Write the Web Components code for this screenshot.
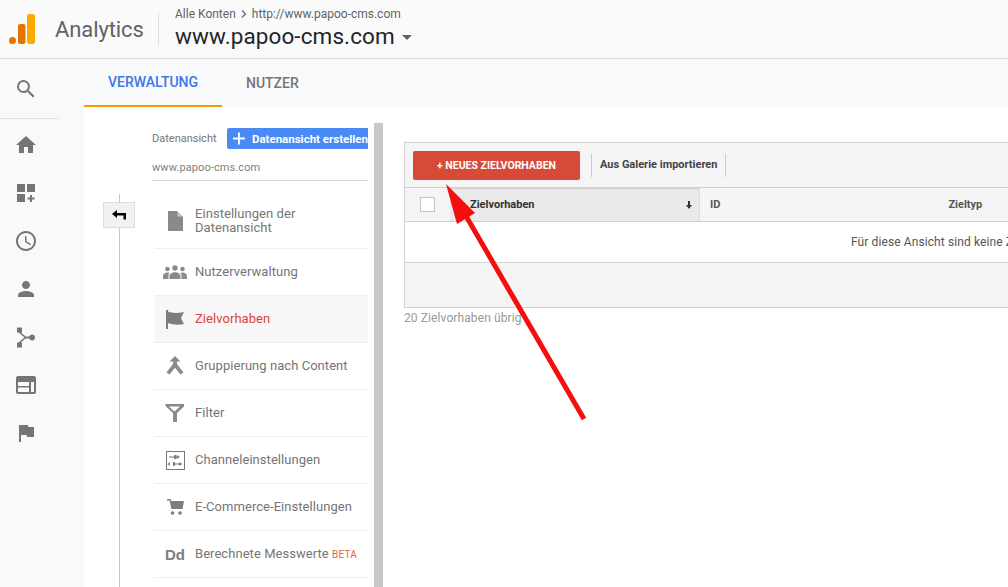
<!DOCTYPE html>
<html lang="de">
  <head>
    <meta charset="UTF-8" />
    <title>Analytics Zielvorhaben</title>
    <style>
      html, body { margin: 0; height: 100%; overflow: hidden; background: #fff; }
      body { font-family: Roboto, "Liberation Sans", sans-serif; }
    </style>
  </head>
  <body>
    <ga-app>
      <ga-header slot="header"></ga-header>
      <ga-rail slot="rail"></ga-rail>
      <ga-tabs slot="tabs"></ga-tabs>
      <ga-admin-nav slot="nav">
        <ga-nav-item icon="doc" tall>Einstellungen der<br />Datenansicht</ga-nav-item>
        <ga-nav-item icon="people">Nutzerverwaltung</ga-nav-item>
        <ga-nav-item icon="flag" active>Zielvorhaben</ga-nav-item>
        <ga-nav-item icon="merge">Gruppierung nach Content</ga-nav-item>
        <ga-nav-item icon="filter">Filter</ga-nav-item>
        <ga-nav-item icon="channel">Channeleinstellungen</ga-nav-item>
        <ga-nav-item icon="cart">E-Commerce-Einstellungen</ga-nav-item>
        <ga-nav-item icon="dd">Berechnete Messwerte <span style="color:#e8633a;font-size:10px;letter-spacing:.2px">BETA</span></ga-nav-item>
      </ga-admin-nav>
      <ga-goals slot="main"></ga-goals>
    </ga-app>
    <ga-arrow></ga-arrow>

    <script>
      const navIcons = {
        doc: `<svg width="18" height="20" viewBox="0 0 18 20"><path fill="#8a8a8a" d="M2 0h9l6 6v14H2z"/><path fill="#fff" d="M11.5 1v4.500H16z" opacity=".55"/></svg>`,
        people: `<svg width="24" height="14" viewBox="0 0 24 14"><g fill="#8a8a8a"><circle cx="12" cy="3" r="2.700"/><circle cx="4.500" cy="4" r="2.300"/><circle cx="19.500" cy="4" r="2.300"/><path d="M0 14v-3c0-2 2.500-3.500 4.500-3.500.8 0 1.500.2 2.200.5C5.600 9 5.500 10 5.500 11v3zM18.500 14v-3c0-1-.1-2-1.200-3 .7-.3 1.400-.5 2.200-.5 2 0 4.500 1.500 4.500 3.500v3zM6.500 14v-3c0-2.200 3-3.800 5.500-3.800s5.500 1.600 5.500 3.800v3z"/></g></svg>`,
        flag: `<svg width="20" height="20" viewBox="0 0 20 20"><path fill="#7d7d7d" d="M1 1h2v1.500C8 4.500 13 4 19 3l-3 6 3 6c-5 1-11 1-16-1v6H1z"/></svg>`,
        merge: `<svg width="18" height="20" viewBox="0 0 18 20"><path fill="#8a8a8a" d="M9 0l5.500 5.500H11V8l6.500 8.500-3 2L9 11.800 3.500 18.500l-3-2L7 8V5.500H3.500z"/></svg>`,
        filter: `<svg width="20" height="18" viewBox="0 0 20 18"><path fill="#8a8a8a" d="M0 0h19v2.500l-7 6.500v9H8V9L1 2.500zM4 2.500l5 4.500h1l5-4.500z" fill-rule="evenodd"/></svg>`,
        channel: `<svg width="19" height="19" viewBox="0 0 19 19"><g fill="none" stroke="#777"><rect x=".5" y=".5" width="18" height="18"/><path d="M3 6h9M7 13h9"/></g><path fill="#777" d="M8 4h2.500v4H8zM11 4l3 2-3 2zM4 11l-2.500 2L4 15zM9 11h-2v4h2zM13 11l3 2-3 2z" opacity=".9"/></svg>`,
        cart: `<svg width="17" height="16" viewBox="0 0 17 16"><g fill="#7d7d7d"><path d="M0 0h3.500l.8 2H17l-1.500 8H4.500L2.500 1.500H0z"/><circle cx="5.500" cy="14" r="1.800"/><circle cx="13" cy="14" r="1.800"/></g></svg>`
      };

      class GaApp extends HTMLElement {
        constructor() {
          super();
          this.attachShadow({ mode: "open" });
          this.shadowRoot.innerHTML = `
            <style>
              :host { display: grid; grid-template-columns: 84px 1fr; grid-template-rows: 59px 48px 1fr; width: 1008px; height: 587px; overflow: hidden; }
              .header { grid-column: 1 / 3; }
              .rail { grid-row: 2 / 4; }
              .body { display: grid; grid-template-columns: 290px 9px 1fr; min-height: 0; }
              .bar { background: #c8c8c8; margin-top: 16px; }
            </style>
            <div class="header"><slot name="header"></slot></div>
            <div class="rail"><slot name="rail"></slot></div>
            <slot name="tabs"></slot>
            <div class="body">
              <slot name="nav"></slot>
              <div class="bar"></div>
              <slot name="main"></slot>
            </div>`;
        }
      }

      class GaHeader extends HTMLElement {
        constructor() {
          super();
          this.attachShadow({ mode: "open" });
          this.shadowRoot.innerHTML = `
            <style>
              :host { display: flex; align-items: center; height: 58px; background: #fafafa; border-bottom: 1px solid #dadce0; }
              svg.logo { margin-left: 9px; flex: none; }
              .name { margin-left: 20px; width: 103px; font-size: 22px; color: #5f6368; letter-spacing: -.1px; }
              .rule { width: 1px; height: 32px; background: #dadce0; }
              .acct { margin-left: 16px; display: flex; flex-direction: column; }
              .crumb { font-size: 12px; line-height: 14px; color: #5f6368; margin-top: -1px; display: flex; align-items: center; gap: 5px; }
              .prop { font-size: 22.500px; line-height: 27px; margin-top: 2px; color: #212529; display: flex; align-items: center; letter-spacing: .1px; }
              .caret { margin-left: 7px; margin-top: 2px; width: 0; height: 0; border: 5px solid transparent; border-top-color: #5f6368; border-bottom: 0; }
            </style>
            <svg class="logo" width="26" height="30" viewBox="0 0 26 30">
              <rect x="18" y="0" width="8" height="30" rx="2.500" fill="#fbab00"/>
              <rect x="9" y="10" width="7.500" height="20" rx="2" fill="#e37400"/>
              <circle cx="3.500" cy="26.500" r="3.500" fill="#e37400"/>
            </svg>
            <div class="name">Analytics</div>
            <div class="rule"></div>
            <div class="acct">
              <div class="crumb"><span>Alle Konten</span>
                <svg width="6" height="8" viewBox="0 0 6 8"><path d="M1 .5L4.500 4 1 7.500" fill="none" stroke="#5f6368" stroke-width="1.200"/></svg>
                <span>http://www.papoo-cms.com</span></div>
              <div class="prop">www.papoo-cms.com<span class="caret"></span></div>
            </div>`;
        }
      }

      class GaRail extends HTMLElement {
        constructor() {
          super();
          this.attachShadow({ mode: "open" });
          const icon = (inner) => `<div class="it"><svg width="24" height="24" viewBox="0 0 24 24" fill="#757575">${inner}</svg></div>`;
          this.shadowRoot.innerHTML = `
            <style>
              :host { display: block; height: 100%; background: #f8f9fa; padding-top: 6px; box-sizing: border-box; }
              .it { height: 48px; display: flex; align-items: center; justify-content: center; width: 52px; }
              hr { width: 59px; margin: 5px 0 2px; border: 0; border-top: 1px solid #e0e0e0; }
            </style>
            ${icon(`<path d="M15.500 14h-.79l-.28-.27A6.470 6.470 0 0 0 16 9.500 6.500 6.500 0 1 0 9.500 16c1.610 0 3.090-.59 4.230-1.570l.27.28v.79l5 4.990L20.490 19l-4.990-5zm-6 0C7.010 14 5 11.990 5 9.500S7.010 5 9.500 5 14 7.010 14 9.500 11.990 14 9.500 14z"/>`)}
            <hr />
            ${icon(`<path d="M10 20v-6h4v6h5v-8h3L12 3 2 12h3v8z"/>`)}
            ${icon(`<path d="M3 3h8v8H3zM13 3h8v8h-8zM3 13h8v8H3zM16 14h2v2.500h2.500v2H18V21h-2v-2.500h-2.500v-2H16z"/>`)}
            ${icon(`<path d="M11.990 2C6.470 2 2 6.480 2 12s4.470 10 9.990 10C17.520 22 22 17.520 22 12S17.520 2 11.990 2zM12 20c-4.420 0-8-3.580-8-8s3.580-8 8-8 8 3.580 8 8-3.580 8-8 8zm.5-13H11v6l5.250 3.150.75-1.230-4.500-2.670z"/>`)}
            ${icon(`<path d="M12 12c2.210 0 4-1.790 4-4s-1.790-4-4-4-4 1.790-4 4 1.790 4 4 4zm0 2c-2.670 0-8 1.340-8 4v2h16v-2c0-2.660-5.330-4-8-4z"/>`)}
            ${icon(`<path d="M3 3h5v5H6.700l5 4h3.500a3 3 0 1 1 0 2h-3.500l-5 4H8v5H3v-5h1.500l6-5-6-5H3z" transform="translate(0 -.5)"/>`)}
            ${icon(`<path fill-rule="evenodd" d="M4 3h16a2 2 0 0 1 2 2v14a2 2 0 0 1-2 2H4a2 2 0 0 1-2-2V5a2 2 0 0 1 2-2zm0 6v10h11v-4.500H4V13h11V9zm13 0v10h3V9z"/>`)}
            ${icon(`<path d="M14.400 6L14 4H5v17h2v-7h5.600l.4 2h7V6z"/>`)}`;
        }
      }

      class GaTabs extends HTMLElement {
        constructor() {
          super();
          this.attachShadow({ mode: "open" });
          this.shadowRoot.innerHTML = `
            <style>
              :host { display: flex; background: #f8f9fa; height: 48px; font-size: 14px; font-weight: 500; }
              div { box-sizing: border-box; height: 48px; display: flex; align-items: center; padding: 0 24px 1px; color: #757575; }
              .on { color: #3b78e7; border-bottom: 2px solid #f59a00; width: 138px; padding-bottom: 0; }
            </style>
            <div class="on">VERWALTUNG</div>
            <div>NUTZER</div>`;
        }
      }

      class GaAdminNav extends HTMLElement {
        constructor() {
          super();
          this.attachShadow({ mode: "open" });
          this.shadowRoot.innerHTML = `
            <style>
              :host { display: block; position: relative; padding: 21px 6px 0 69px; color: #757575; }
              .line { position: absolute; left: 35px; top: 87px; bottom: 0; width: 1px; background: #c8c8c8; }
              .back { position: absolute; left: 19px; top: 95px; box-sizing: border-box; width: 32px; height: 26px; background: #f1f1f1; border: 1px solid #ddd; display: flex; align-items: center; justify-content: center; }
              .top { display: flex; align-items: center; height: 21px; margin-left: -1px; }
              .lbl { font-size: 11px; color: #757575; width: 75px; flex: none; }
              .btn { flex: 1; height: 21px; box-sizing: border-box; background: #4a8af4; border-radius: 2px 0 0 2px; color: #fff; font-size: 11.500px; font-weight: 700; display: flex; align-items: center; white-space: nowrap; padding-left: 6px; gap: 7px; overflow: hidden; }
              .view { margin: 6px 0 0 -1px; height: 25px; line-height: 25px; font-size: 11px; color: #808080; border-bottom: 1px solid #d8d8d8; letter-spacing: .1px; }
              .items { margin-top: 12px; }
            </style>
            <div class="line"></div>
            <div class="back"><svg width="14" height="10" viewBox="0 0 14 10"><path d="M0 4l5-4v3h9v6.500h-2.500V5.500H5V8z"/></svg></div>
            <div class="top"><span class="lbl">Datenansicht</span>
              <div class="btn"><svg width="13" height="13" viewBox="0 0 13 13"><path fill="#fff" d="M5.500 0h2v5.500H13v2H7.500V13h-2V7.500H0v-2h5.500z"/></svg>Datenansicht erstellen</div></div>
            <div class="view">www.papoo-cms.com</div>
            <div class="items"><slot></slot></div>`;
        }
      }

      class GaNavItem extends HTMLElement {
        constructor() {
          super();
          this.attachShadow({ mode: "open" });
          this.shadowRoot.innerHTML = `
            <style>
              :host { display: flex; align-items: center; box-sizing: border-box; height: 47px; border-bottom: 1px solid #eee; font-size: 13px; line-height: 14px; color: #757575; margin-left: 1px; }
              :host([tall]) { height: 56px; }
              :host([active]) { background: #f7f7f7; color: #db4437; }
              .ic { width: 41px; flex: none; display: flex; justify-content: center; align-items: center; padding-left: 1px; box-sizing: border-box; color: #7d7d7d; font: 700 15px "Liberation Sans", sans-serif; }
              .tx { white-space: nowrap; letter-spacing: .05px; }
            </style>
            <div class="ic"></div>
            <div class="tx"><slot></slot></div>`;
        }
        connectedCallback() {
          const name = this.getAttribute("icon");
          const box = this.shadowRoot.querySelector(".ic");
          if (name === "dd") box.textContent = "Dd";
          else box.innerHTML = navIcons[name];
        }
      }

      class GaGoals extends HTMLElement {
        constructor() {
          super();
          this.attachShadow({ mode: "open" });
          this.shadowRoot.innerHTML = `
            <style>
              :host { display: block; padding: 35px 0 0 21px; min-width: 0; overflow: hidden; font-size: 11px; color: #444; }
              .wrap { width: 900px; border: 1px solid #d0d0d0; box-sizing: border-box; background: #f5f5f5; }
              .bar { height: 44px; display: flex; align-items: center; padding-left: 8px; border-bottom: 1px solid #d0d0d0; }
              .new { width: 167px; height: 29px; margin-top: 0; background: #d84a38; border-radius: 2px; color: #fff; font-weight: 700; font-size: 10.500px; display: flex; align-items: center; justify-content: center; }
              .sep { width: 1px; height: 23px; background: #ccc; }
              .gal { padding: 0 8px; font-weight: 700; font-size: 11px; color: #444; margin-top: -1px; }
              .head { display: grid; grid-template-columns: 45px 250px 1fr; height: 33px; border-bottom: 1px solid #d0d0d0; font-weight: 700; align-items: stretch; }
              .check { display: flex; align-items: center; justify-content: center; padding-right: 0; }
              .box { width: 13px; height: 13px; background: #fff; border: 1px solid #c4c4c4; }
              .sort { background: #eaeaea; border-right: 1px solid #dcdcdc; box-shadow: inset 0 2px 2px -1px #ccc; display: flex; align-items: center; justify-content: space-between; padding: 0 7px 0 20px; color: #333; }
              .cols { display: flex; align-items: center; padding-left: 10px; color: #555; }
              .cols span:last-child { margin-left: 228px; }
              .empty { height: 40px; background: #fff; border-bottom: 1px solid #d0d0d0; font-size: 12px; color: #555; display: flex; align-items: center; padding-left: 446px; white-space: nowrap; letter-spacing: .1px; }
              .foot { height: 44px; }
              .left { font-size: 12px; color: #999; margin-top: 3px; letter-spacing: .1px; }
            </style>
            <div class="wrap">
              <div class="bar"><div class="new">+ NEUES ZIELVORHABEN</div><div style="width:11px"></div><div class="sep"></div><div class="gal">Aus Galerie importieren</div><div class="sep"></div></div>
              <div class="head">
                <div class="check"><div class="box"></div></div>
                <div class="sort"><span>Zielvorhaben</span><svg width="6" height="8" viewBox="0 0 6 8"><path fill="#333" d="M2 0h2v4h2L3 8 0 4h2z"/></svg></div>
                <div class="cols"><span>ID</span><span>Zieltyp</span></div>
              </div>
              <div class="empty">Für diese Ansicht sind keine Zielvorhaben vorhanden.</div>
              <div class="foot"></div>
            </div>
            <div class="left">20 Zielvorhaben übrig</div>`;
        }
      }

      // annotation drawn on top of the screenshot
      class GaArrow extends HTMLElement {
        constructor() {
          super();
          this.attachShadow({ mode: "open" });
          this.shadowRoot.innerHTML = `
            <style>:host { position: absolute; left: 0; top: 0; display: block; pointer-events: none; }</style>
            <svg width="1008" height="587" viewBox="0 0 1008 587" style="display:block">
              <path d="M584 419L466 216" stroke="#f60d0d" stroke-width="5" fill="none"/>
              <path d="M446 184L475 213L457 224z" fill="#f60d0d"/>
            </svg>`;
        }
      }

      customElements.define("ga-app", GaApp);
      customElements.define("ga-header", GaHeader);
      customElements.define("ga-rail", GaRail);
      customElements.define("ga-tabs", GaTabs);
      customElements.define("ga-admin-nav", GaAdminNav);
      customElements.define("ga-nav-item", GaNavItem);
      customElements.define("ga-goals", GaGoals);
      customElements.define("ga-arrow", GaArrow);
    </script>
  </body>
</html>
